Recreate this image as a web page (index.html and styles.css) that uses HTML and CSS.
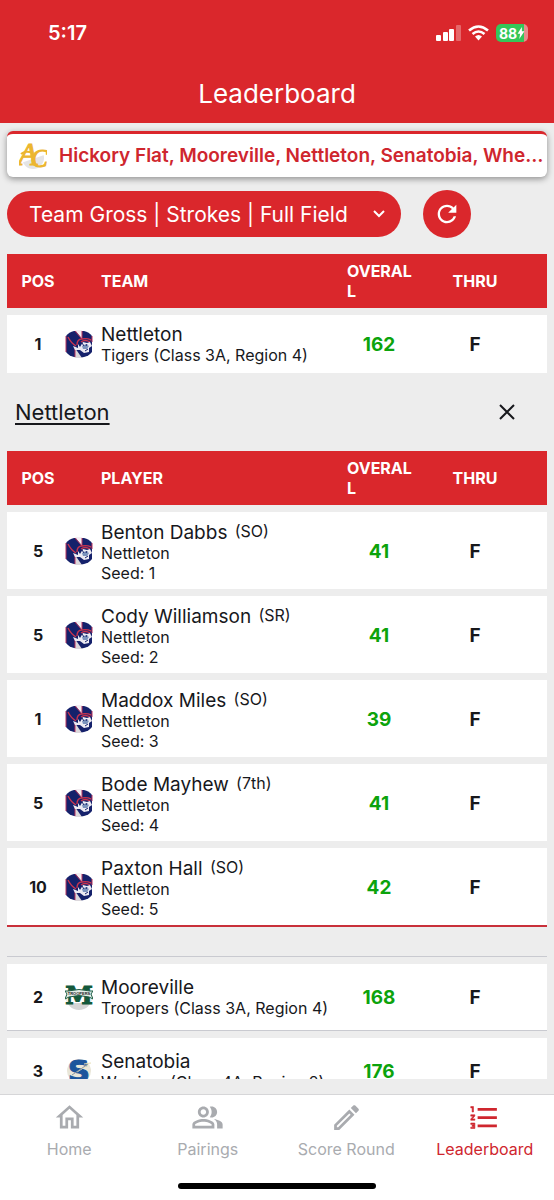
FILE: index.html
```html
<!DOCTYPE html>
<html lang="en">
<head>
    <meta charset="UTF-8">
    <meta name="viewport" content="width=device-width, initial-scale=1.0">
    <title>Leaderboard</title>
    <link rel="stylesheet" href="styles.css">
</head>
<body>
    <!-- Logo shared by the team row and its players -->
    <svg class="sprites" aria-hidden="true">
        <symbol id="logo-nettleton" viewBox="0 0 28 28">
            <path d="M1 6 Q4 2 9 1 H19 Q24 2 27 6 V22 Q24 26 19 27 L14 28 L9 27 Q4 26 1 22Z" fill="#15216b"/>
            <path d="M10 0 H17 V9Z" fill="#f4eef2"/>
            <path d="M10 18 L17 28 H10Z" fill="#dcd8dc"/>
            <path d="M1 6 V22 M10 1 L17 9 V1 M27 6 V12 M10 27 V18" fill="none" stroke="#b9345f" stroke-width="1"/>
            <path d="M3 7 Q6 13 11 16 M12 15 Q12 9 17 9 Q22 8 26 10 M16 12 Q20 9 25 12" fill="none" stroke="#c8344f" stroke-width="1.400"/>
            <path d="M8 16 L13 18 L13 14 L15 17 L18 12 L22 13 L25 12 L27 16 L24 18 L24 22 L19 23 L15 20 L10 20Z" fill="#eceaf2"/>
            <path d="M17 16 L21 14 L24 16 L22 19 L18 19Z" fill="#7b93bd"/>
            <path d="M17 13 L19 16 M20 21 L23 19 M22 14 L21 16" stroke="#15216b" stroke-width="1"/>
        </symbol>
    </svg>

    <header class="app-header">
        <div class="status-bar">
            <span class="clock">5:17</span>
            <div class="status-icons">
                <svg width="25" height="16" viewBox="0 0 25 16" fill="#fff" aria-hidden="true">
                    <rect x="0" y="10" width="5" height="6" rx="1"/>
                    <rect x="7" y="7" width="5" height="9" rx="1"/>
                    <rect x="13" y="4" width="5" height="12" rx="1"/>
                    <rect x="20" y="0" width="5" height="16" rx="1" opacity=".3"/>
                </svg>
                <svg width="21" height="16" viewBox="0 0 21 16" aria-hidden="true">
                    <path d="M1 5.5 Q10.500 -2.500 20 5.500 M4.500 9 Q10.500 4 16.500 9" fill="none" stroke="#fff" stroke-width="2.600"/>
                    <path d="M7 11.500 Q10.500 8.500 14 11.500 L10.500 15.500Z" fill="#fff"/>
                </svg>
                <div class="battery">
                    <span class="battery-level">88</span>
                    <svg width="8" height="12" viewBox="0 0 8 14" fill="#fff" aria-hidden="true"><path d="M5 0 L0 8 H3 L2 14 L8 5 H5Z"/></svg>
                </div>
            </div>
        </div>
        <h1>Leaderboard</h1>
    </header>

    <main>
        <div class="event-card">
            <svg class="event-logo" width="28" height="30" viewBox="0 0 28 30" role="img" aria-label="AC">
                <circle cx="14" cy="17" r="11" fill="#e4e4e6"/>
                <path d="M0 0 H28 V13 L2 22Z" fill="#fff"/>
                <path d="M2 13 Q6 9 14 12" fill="none" stroke="#ecb62f" stroke-width="2"/>
                <text x="-1" y="24" class="logo-a">A</text>
                <text x="12" y="26" class="logo-c">C</text>
            </svg>
            <span class="event-title">Hickory Flat, Mooreville, Nettleton, Senatobia, Wheeler</span>
        </div>

        <div class="controls">
            <div class="select-wrap">
                <select class="view-select" aria-label="Leaderboard view">
                    <option>Team Gross | Strokes | Full Field</option>
                </select>
                <svg class="chevron" width="12" height="8" viewBox="0 0 12 8" aria-hidden="true"><path d="M1 1 L6 6 L11 1" fill="none" stroke="#fff" stroke-width="2"/></svg>
            </div>
            <button type="button" class="refresh-btn" aria-label="Refresh">
                <svg width="28" height="28" viewBox="0 0 24 24" fill="#fff"><path d="M17.65 6.35C16.2 4.9 14.21 4 12 4c-4.42 0-7.99 3.58-7.99 8s3.57 8 7.99 8c3.73 0 6.84-2.55 7.73-6h-2.08c-.82 2.33-3.04 4-5.65 4-3.31 0-6-2.69-6-6s2.69-6 6-6c1.66 0 3.14.69 4.22 1.78L13 11h7V4l-2.35 2.35z"/></svg>
            </button>
        </div>

        <div class="board-scroll">
            <table class="board">
                <colgroup>
                    <col class="col-pos"><col><col class="col-num"><col class="col-num"><col class="col-end">
                </colgroup>
                <thead>
                    <tr><th class="pos">POS</th><th class="who-head">TEAM</th><th class="overall">OVERALL</th><th>THRU</th><th></th></tr>
                </thead>
                <tbody>
                    <tr class="team expanded">
                        <td class="pos">1</td>
                        <td><div class="who"><svg class="logo"><use href="#logo-nettleton"/></svg><div><div class="name">Nettleton</div><div class="sub">Tigers (Class 3A, Region 4)</div></div></div></td>
                        <td class="score">162</td><td class="thru">F</td><td></td>
                    </tr>
                    <tr class="detail">
                        <td colspan="5">
                            <div class="detail-bar">
                                <a href="#nettleton" class="detail-link">Nettleton</a>
                                <button type="button" class="close-btn" aria-label="Close">
                                    <svg width="16" height="16" viewBox="0 0 16 16"><path d="M1 1 L15 15 M15 1 L1 15" stroke="#17181c" stroke-width="2"/></svg>
                                </button>
                            </div>
                            <table class="board players" id="nettleton">
                                <colgroup>
                                    <col class="col-pos"><col><col class="col-num"><col class="col-num"><col class="col-end">
                                </colgroup>
                                <thead>
                                    <tr><th class="pos">POS</th><th class="who-head">PLAYER</th><th class="overall">OVERALL</th><th>THRU</th><th></th></tr>
                                </thead>
                                <tbody>
                                    <tr class="player">
                                        <td class="pos">5</td>
                                        <td><div class="who"><svg class="logo"><use href="#logo-nettleton"/></svg><div><div class="name">Benton Dabbs <span class="grade">(SO)</span></div><div class="sub">Nettleton</div><div class="sub">Seed: 1</div></div></div></td>
                                        <td class="score">41</td><td class="thru">F</td><td></td>
                                    </tr>
                                    <tr class="player">
                                        <td class="pos">5</td>
                                        <td><div class="who"><svg class="logo"><use href="#logo-nettleton"/></svg><div><div class="name">Cody Williamson <span class="grade">(SR)</span></div><div class="sub">Nettleton</div><div class="sub">Seed: 2</div></div></div></td>
                                        <td class="score">41</td><td class="thru">F</td><td></td>
                                    </tr>
                                    <tr class="player">
                                        <td class="pos">1</td>
                                        <td><div class="who"><svg class="logo"><use href="#logo-nettleton"/></svg><div><div class="name">Maddox Miles <span class="grade">(SO)</span></div><div class="sub">Nettleton</div><div class="sub">Seed: 3</div></div></div></td>
                                        <td class="score">39</td><td class="thru">F</td><td></td>
                                    </tr>
                                    <tr class="player">
                                        <td class="pos">5</td>
                                        <td><div class="who"><svg class="logo"><use href="#logo-nettleton"/></svg><div><div class="name">Bode Mayhew <span class="grade">(7th)</span></div><div class="sub">Nettleton</div><div class="sub">Seed: 4</div></div></div></td>
                                        <td class="score">41</td><td class="thru">F</td><td></td>
                                    </tr>
                                    <tr class="player">
                                        <td class="pos">10</td>
                                        <td><div class="who"><svg class="logo"><use href="#logo-nettleton"/></svg><div><div class="name">Paxton Hall <span class="grade">(SO)</span></div><div class="sub">Nettleton</div><div class="sub">Seed: 5</div></div></div></td>
                                        <td class="score">42</td><td class="thru">F</td><td></td>
                                    </tr>
                                </tbody>
                            </table>
                        </td>
                    </tr>
                    <tr class="team">
                        <td class="pos">2</td>
                        <td>
                            <div class="who">
                                <svg class="logo" viewBox="0 0 28 28" aria-hidden="true">
                                    <circle cx="14" cy="14" r="13" fill="#d6d6d6"/>
                                    <path d="M0 0 H28 V12 L25 20 H3 L0 12Z" fill="#fff"/>
                                    <text x="14" y="21" class="logo-m" text-anchor="middle">M</text>
                                    <path d="M3 8 Q14 5 25 8 L28 8 L26 11 L28 16 L24 14 Q14 11 4 14 L0 16 L2 11 L0 8Z" fill="#e4ede8" stroke="#1d5c42" stroke-width="1"/>
                                    <text x="14" y="12" class="logo-banner" text-anchor="middle">TROOPERS</text>
                                </svg>
                                <div><div class="name">Mooreville</div><div class="sub">Troopers (Class 3A, Region 4)</div></div>
                            </div>
                        </td>
                        <td class="score">168</td><td class="thru">F</td><td></td>
                    </tr>
                    <tr class="team">
                        <td class="pos">3</td>
                        <td>
                            <div class="who">
                                <svg class="logo" viewBox="0 0 28 28" aria-hidden="true">
                                    <circle cx="14" cy="14" r="12" fill="#e9e6d8"/>
                                    <text x="14" y="25" class="logo-s" text-anchor="middle">S</text>
                                    <path d="M12 15 L23 8 M19 7 L26 6" stroke="#e6dfb4" stroke-width="1"/>
                                    <path d="M7 18 L23 7" stroke="#8b9aa6" stroke-width="1"/>
                                </svg>
                                <div><div class="name">Senatobia</div><div class="sub">Warriors (Class 4A, Region 2)</div></div>
                            </div>
                        </td>
                        <td class="score">176</td><td class="thru">F</td><td></td>
                    </tr>
                </tbody>
            </table>
        </div>
    </main>

    <footer class="tab-bar">
        <nav>
            <a href="#home">
                <svg viewBox="0 0 24 24"><path d="M12 5.69l5 4.500V18h-2v-6H9v6H7v-7.810l5-4.500M12 3L2 12h3v8h6v-6h2v6h6v-8h3L12 3z"/></svg>
                Home
            </a>
            <a href="#pairings">
                <svg viewBox="0 0 24 24"><path d="M16.67 13.13C18.04 14.06 19 15.32 19 17v3h4v-3c0-2.18-3.57-3.47-6.33-3.87zM15 12c2.21 0 4-1.79 4-4s-1.79-4-4-4c-.47 0-.91.1-1.33.24C14.5 5.27 15 6.58 15 8s-.5 2.73-1.33 3.76c.42.14.86.24 1.33.24zM9 12c2.21 0 4-1.79 4-4s-1.79-4-4-4-4 1.79-4 4 1.79 4 4 4zm0-6c1.1 0 2 .9 2 2s-.9 2-2 2-2-.9-2-2 .9-2 2-2zM9 13c-2.67 0-8 1.34-8 4v3h16v-3c0-2.66-5.33-4-8-4zm6 5H3v-.99C3.2 16.29 6.3 15 9 15s5.8 1.29 6 2v1z"/></svg>
                Pairings
            </a>
            <a href="#score">
                <svg viewBox="0 0 24 24"><path d="M14.06 9.02l.92.92L5.92 19H5v-.92l9.06-9.06M17.66 3c-.25 0-.51.1-.7.29l-1.83 1.83 3.75 3.75 1.83-1.83c.39-.39.39-1.02 0-1.41l-2.34-2.34c-.2-.2-.45-.29-.71-.29zm-3.6 3.19L3 17.25V21h3.75L17.81 9.94l-3.75-3.75z"/></svg>
                Score Round
            </a>
            <a href="#leaderboard" class="active" aria-current="page">
                <svg viewBox="0 0 24 24"><path d="M2 17h2v.5H3v1h1v.5H2v1h3v-4H2v1zm1-9h1V4H2v1h1v3zm-1 3h1.8L2 13.1v.9h3v-1H3.2L5 10.9V10H2v1z" stroke="currentColor" stroke-width=".4"/><path d="M7 5v2h14V5H7zm0 14h14v-2H7v2zm0-6h14v-2H7v2z"/></svg>
                Leaderboard
            </a>
        </nav>
        <div class="home-indicator"></div>
    </footer>
</body>
</html>
```
FILE: styles.css
```css
* {
    box-sizing: border-box;
}

body {
    font-family: Inter, "Liberation Sans", sans-serif;
    margin: 0;
    height: 100vh;
    display: flex;
    flex-direction: column;
    background: #ededed;
    color: #17181c;
}

.sprites {
    width: 0;
    height: 0;
    position: absolute;
}

/* Header */
.app-header {
    background: #da272c;
    color: #fff;
    flex: none;
}

.status-bar {
    display: flex;
    justify-content: space-between;
    align-items: center;
    height: 66px;
    padding: 0 26px 0 48px;
}

.clock {
    font-size: 20px;
    font-weight: 600;
}

.status-icons {
    display: flex;
    align-items: center;
    gap: 7px;
}

.battery {
    display: flex;
    align-items: center;
    justify-content: center;
    width: 32px;
    height: 18px;
    border-radius: 5px;
    background: linear-gradient(to right, #34c759 88%, #e98a8c 88%);
}

.battery-level {
    font-size: 14px;
    font-weight: 700;
}

h1 {
    margin: 0;
    padding: 12px 0 14px;
    font-size: 26px;
    line-height: 31px;
    font-weight: 400;
    text-align: center;
}

/* Event card and controls */
main {
    flex: 1;
    min-height: 0;
    display: flex;
    flex-direction: column;
    padding: 8px 7px 0;
}

.event-card {
    display: flex;
    align-items: center;
    gap: 12px;
    flex: none;
    height: 46px;
    padding: 1px 3px 0 12px;
    border-top: 3px solid #da272c;
    border-radius: 6px;
    background: #fff;
    box-shadow: 0 2px 6px rgba(0, 0, 0, 0.4);
}

.event-logo {
    flex: none;
}

.event-title {
    min-width: 0;
    overflow: hidden;
    white-space: nowrap;
    text-overflow: ellipsis;
    color: #cf262e;
    font-size: 19px;
    line-height: 26px;
    font-weight: 600;
}

.controls {
    display: flex;
    align-items: center;
    gap: 22px;
    flex: none;
    padding: 13px 0 9px;
}

.select-wrap {
    display: grid;
    align-items: center;
    width: 73%;
}

.view-select,
.chevron {
    grid-area: 1 / 1;
}

.view-select {
    appearance: none;
    width: 100%;
    height: 46px;
    padding: 0 48px 0 22px;
    border: none;
    border-radius: 23px;
    background: #da272c;
    color: #fff;
    font: 400 21px Inter, "Liberation Sans", sans-serif;
}

.chevron {
    justify-self: end;
    margin-right: 16px;
    pointer-events: none;
}

.refresh-btn {
    display: grid;
    place-items: center;
    width: 48px;
    height: 48px;
    padding: 0;
    border: none;
    border-radius: 50%;
    background: #da272c;
    cursor: pointer;
}

/* Tables */
.board-scroll {
    flex: 1;
    min-height: 0;
    overflow: auto;
    scrollbar-width: none;
}

.board {
    width: 100%;
    table-layout: fixed;
    border-collapse: separate;
    border-spacing: 0 7px;
}

.col-pos {
    width: 58px;
}

.col-num {
    width: 96px;
}

.col-end {
    width: 24px;
}

th,
td {
    padding: 0;
    text-align: center;
}

th {
    height: 54px;
    background: #da272c;
    color: #fff;
    font-size: 16px;
    line-height: 20px;
    font-weight: 700;
}

th.who-head {
    padding-left: 36px;
    text-align: left;
}

th.overall {
    padding: 0 12px 0 16px;
    text-align: left;
    word-break: break-all;
}

td {
    background: #fff;
}

.pos {
    padding-left: 4px;
    font-size: 16px;
    font-weight: 700;
}

.team td {
    height: 67px;
    border-bottom: 1px solid #c9cad0;
}

.team.expanded td {
    height: 58px;
    border-bottom: none;
}

.player td {
    height: 77px;
}

.who {
    display: flex;
    align-items: center;
    gap: 8px;
    text-align: left;
    white-space: nowrap;
}

.logo {
    flex: none;
    width: 28px;
    height: 28px;
}

.name {
    padding-top: 2px;
    font-size: 19px;
    line-height: 20px;
    font-weight: 400;
}

.grade {
    margin-left: 2px;
    font-size: 16px;
    font-weight: 400;
    vertical-align: 2px;
}

.sub {
    font-size: 16px;
    line-height: 20px;
}

.score,
.thru {
    padding-top: 1px;
    font-size: 19px;
    font-weight: 700;
}

.score {
    color: #0ca30c;
}

.detail > td {
    padding-bottom: 22px;
    border-bottom: 1px solid #c9cad0;
    background: #ededed;
}

.detail-bar {
    display: flex;
    align-items: center;
    justify-content: space-between;
    height: 64px;
    padding: 0 32px 0 8px;
}

.detail-link {
    color: #17181c;
    font-size: 22px;
    text-underline-offset: 3px;
}

.close-btn {
    display: flex;
    padding: 0;
    border: none;
    background: none;
    cursor: pointer;
}

.players tbody tr:last-child td {
    height: 79px;
    border-bottom: 2px solid #c9303a;
}

/* Logo lettering */
.logo-a {
    font: italic 32px "Liberation Serif", serif;
    fill: #ecb62f;
    stroke: #ecb62f;
}

.logo-c {
    font: italic 25px "Liberation Serif", serif;
    fill: #ecb62f;
    stroke: #ecb62f;
}

.logo-m {
    font: bold 25px "DejaVu Serif", serif;
    fill: #14593b;
    stroke: #14593b;
}

.logo-banner {
    font: bold 4px "Liberation Sans", sans-serif;
    fill: #222;
}

.logo-s {
    font: bold 31px "DejaVu Sans", sans-serif;
    fill: #1b559c;
    stroke: #1b559c;
}

/* Bottom tabs */
.tab-bar {
    flex: none;
    height: 106px;
    margin-top: 15px;
    border-top: 1px solid #d6d6d8;
    background: #fff;
}

.tab-bar nav {
    display: grid;
    grid-template-columns: repeat(4, 1fr);
    height: 88px;
    padding-top: 6px;
}

.tab-bar a {
    display: flex;
    flex-direction: column;
    align-items: center;
    gap: 5px;
    color: #a9abaf;
    font-size: 16px;
    line-height: 20px;
    text-decoration: none;
}

.tab-bar a.active {
    color: #cf262e;
}

.tab-bar svg {
    width: 33px;
    height: 33px;
    fill: currentColor;
}

.home-indicator {
    width: 198px;
    height: 6px;
    margin: 0 auto;
    border-radius: 3px;
    background: #000;
}
```
